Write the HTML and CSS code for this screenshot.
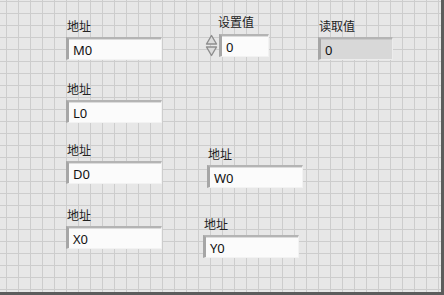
FILE: index.html
```html
<!DOCTYPE html>
<html lang="zh">
<head>
  <meta charset="UTF-8">
  <title>前面板</title>
  <link rel="stylesheet" href="styles.css">
</head>
<body>
  <div class="panel">
    <!-- 地址 controls, left column -->
    <div class="ctl addr-m">
      <div class="label">地址</div>
      <div class="box">M0</div>
    </div>
    <div class="ctl addr-l">
      <div class="label">地址</div>
      <div class="box">L0</div>
    </div>
    <div class="ctl addr-d">
      <div class="label">地址</div>
      <div class="box">D0</div>
    </div>
    <div class="ctl addr-x">
      <div class="label">地址</div>
      <div class="box">X0</div>
    </div>

    <!-- numeric control with spinner -->
    <div class="ctl set-val">
      <div class="label">设置值</div>
      <div class="num-row">
        <svg class="spin" width="13" height="25" viewBox="0 0 13 25">
          <path d="M1.5 11 L6.5 2.5 L11.5 11 Z" fill="#dcdcdc" stroke="#8e8e8e" stroke-width="1.4" stroke-linejoin="round"/>
          <path d="M1.5 14 L6.5 22.5 L11.5 14 Z" fill="#dcdcdc" stroke="#8e8e8e" stroke-width="1.4" stroke-linejoin="round"/>
        </svg>
        <div class="box num">0</div>
      </div>
    </div>

    <!-- indicator -->
    <div class="ctl read-val">
      <div class="label">读取值</div>
      <div class="box ind">0</div>
    </div>

    <div class="ctl addr-w">
      <div class="label">地址</div>
      <div class="box">W0</div>
    </div>
    <div class="ctl addr-y">
      <div class="label">地址</div>
      <div class="box">Y0</div>
    </div>
  </div>
</body>
</html>
```

FILE: styles.css
```css
body { margin: 0; background: #e8e8e8; font-family: "Noto Sans", "Noto Sans CJK SC", sans-serif; font-size: 12px; color: #1a1a1a; }

.panel {
  position: relative;
  width: 441px;
  height: 292px;
  background-color: #e7e7e7;
  background-image:
    linear-gradient(to right, #cdcdcd 1px, transparent 1px),
    linear-gradient(to bottom, #cdcdcd 1px, transparent 1px);
  background-size: 12px 12px;
  background-position: 6px 1px;
  border-right: 3px solid #5c5c5c;
  border-bottom: 3px solid #5c5c5c;
}

/* controls sit on the free canvas of the front panel */
.ctl { position: absolute; }
.label { font-family: "Noto Sans CJK SC", sans-serif; font-size: 12px; line-height: 14px; height: 18px; padding-left: 1px; color: #222; }

.box {
  box-sizing: border-box;
  width: 96px;
  height: 23px;
  padding: 3px 0 0 4px;
  background: #fbfbfb;
  border-top: 2px solid #b4b4b4;
  border-left: 3px solid #a6a6a6;
  border-right: 1px solid #f2f2f2;
  border-bottom: 1px solid #f2f2f2;
  box-shadow: inset 0 1px 0 #dcdcdc;
  font-size: 13px;
  line-height: 16px;
  color: #111;
}

.addr-m { left: 66px; top: 19px; }
.addr-l { left: 66px; top: 82px; }
.addr-d { left: 66px; top: 143px; }
.addr-x { left: 66px; top: 208px; }
.addr-w { left: 207px; top: 147px; }
.addr-y { left: 203px; top: 217px; }

.set-val { left: 205px; top: 15px; }
.set-val .label { padding-left: 13px; }
.num-row { display: flex; align-items: center; gap: 1px; }
.spin { display: block; }
.box.num { width: 50px; }

.read-val { left: 318px; top: 19px; }
.box.ind { width: 75px; background: #d8d8d8; border-right-color: #ececec; border-bottom-color: #ececec; box-shadow: inset 0 1px 0 #c8c8c8; }
```
